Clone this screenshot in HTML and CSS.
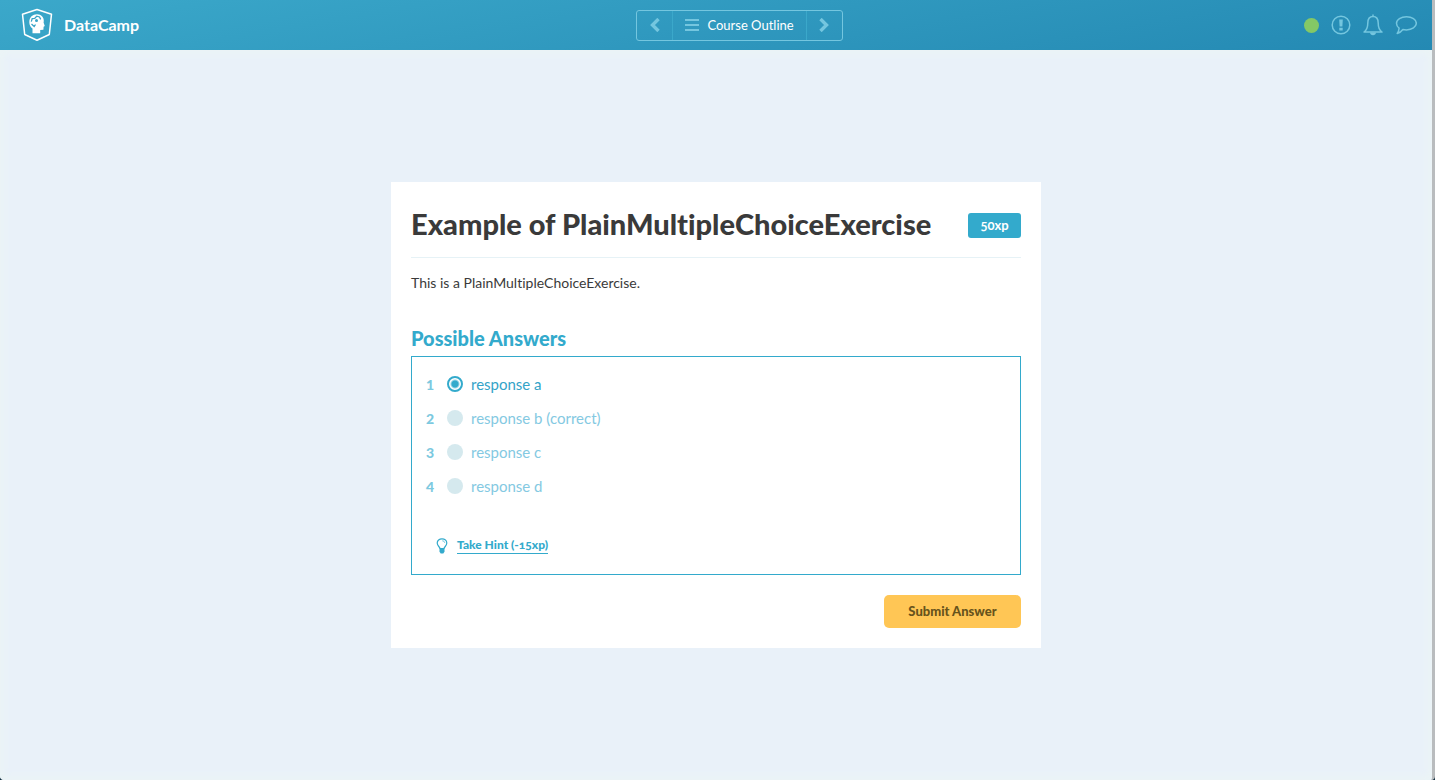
FILE: index.html
```html
<!DOCTYPE html>
<html lang="en">
<head>
<meta charset="utf-8">
<title>DataCamp</title>
<meta name="viewport" content="width=device-width, initial-scale=1">
<link rel="stylesheet" href="styles.css">
</head>
<body>
<header class="topbar">
  <a class="brand" href="#">
    <svg class="brand-logo" width="32" height="34" viewBox="0 0 32 34" aria-hidden="true">
      <path d="M16 1.500 30.500 6.200 28.300 26.500 16 32.300 3.700 26.500 1.500 6.200Z" fill="none" stroke="currentColor" stroke-width="1.500" stroke-linejoin="round"/>
      <path d="M11.500 25.300V20.500C9.700 19.300 8.300 17.200 8.300 14.200 8.300 9 11.800 6.200 16 6.200c4.400 0 6.800 3 6.800 6.500l-.2 2 1.200 3.200-1.200.8-.2 3-3.200.4v3.200Z" fill="currentColor"/>
      <path d="m10.300 13.600.9-3 2.500-.2 2-2.200 2.800.8 1.200 2.400M10.500 16l2.700 2.500 1.300-2" fill="none" stroke="#38a3c7" stroke-width="1.300"/>
      <circle cx="15.500" cy="12.500" r="1.500" fill="#38a3c7"/>
    </svg>
    <span>DataCamp</span>
  </a>
  <nav class="course-nav" aria-label="Course">
    <button class="nav-step" type="button" aria-label="Previous exercise">
      <svg width="10" height="14" viewBox="0 0 10 14"><path d="M8.500 1 2.500 7l6 6" fill="none" stroke="currentColor" stroke-width="3.400"/></svg>
    </button>
    <button class="nav-outline" type="button">
      <svg width="14" height="12" viewBox="0 0 14 12" aria-hidden="true"><path d="M0 1h14M0 6h14M0 11h14" stroke="currentColor" stroke-width="2"/></svg>
      <span>Course Outline</span>
    </button>
    <button class="nav-step" type="button" aria-label="Next exercise">
      <svg width="10" height="14" viewBox="0 0 10 14"><path d="m1.500 1 6 6-6 6" fill="none" stroke="currentColor" stroke-width="3.400"/></svg>
    </button>
  </nav>
  <div class="tools">
    <span class="status" role="img" aria-label="Connected"></span>
    <button class="tool" type="button" aria-label="Report an issue">
      <svg width="20" height="20" viewBox="0 0 20 20"><circle cx="10" cy="10" r="8.800" fill="none" stroke="currentColor" stroke-width="1.500"/><path d="M8.200 4.500h3.600l-.4 6.900H8.600ZM8.300 12.700h3.400v2.700H8.300Z" fill="currentColor"/></svg>
    </button>
    <button class="tool" type="button" aria-label="Notifications">
      <svg width="20" height="22" viewBox="0 0 20 22"><path d="M10 .5v2M1 18c3-2 3.800-4 3.800-9 0-4 2-6.500 5.200-6.500s5.200 2.500 5.200 6.500c0 5 .8 7 3.800 9Z" fill="none" stroke="currentColor" stroke-width="1.500" stroke-linejoin="round"/><path d="M7 18.500h6c-.2 1.800-1.300 2.800-3 2.800s-2.800-1-3-2.800Z" fill="currentColor"/></svg>
    </button>
    <button class="tool" type="button" aria-label="Messages">
      <svg width="22" height="20" viewBox="0 0 22 20"><path d="M11.500 1.700c5.500 0 9.800 2.900 9.800 6.600s-4.300 6.600-9.800 6.600c-1.300 0-2.500-.1-3.600-.4-1.500 2-3.500 3.400-5.700 3.900 1-1.400 1.700-2.900 1.900-5.200C2.500 12 1.500 10.300 1.500 8.300c0-3.700 4.500-6.600 10-6.600Z" fill="none" stroke="currentColor" stroke-width="1.500" stroke-linejoin="round"/></svg>
    </button>
  </div>
</header>
<main class="stage">
  <form class="card">
    <div class="card-head">
      <h1 class="title">Example of PlainMultipleChoiceExercise</h1>
      <span class="xp">50xp</span>
    </div>
    <p class="intro">This is a PlainMultipleChoiceExercise.</p>
    <h2 class="subtitle" id="answers-title">Possible Answers</h2>
    <div class="answers" role="radiogroup" aria-labelledby="answers-title">
      <ol class="options">
        <li class="option"><span class="num">1</span><input class="radio" type="radio" name="answer" id="a1" checked><label class="option-label" for="a1">response a</label></li>
        <li class="option"><span class="num">2</span><input class="radio" type="radio" name="answer" id="a2"><label class="option-label" for="a2">response b (correct)</label></li>
        <li class="option"><span class="num">3</span><input class="radio" type="radio" name="answer" id="a3"><label class="option-label" for="a3">response c</label></li>
        <li class="option"><span class="num">4</span><input class="radio" type="radio" name="answer" id="a4"><label class="option-label" for="a4">response d</label></li>
      </ol>
      <div class="hint">
        <svg width="12" height="16" viewBox="0 0 12 16" aria-hidden="true"><path d="M4 10.500C3.600 8.700 1.200 7.700 1.200 5.100 1.200 2.600 3.300.8 6 .8s4.800 1.800 4.800 4.300c0 2.600-2.400 3.600-2.800 5.400Z" fill="none" stroke="currentColor" stroke-width="1.200"/><path d="M6.300 2.800c1.400 0 2.200.8 2.400 2" fill="none" stroke="currentColor" stroke-width=".7"/><path d="M3.500 10.200h5v3.600L7.300 15.500H4.700L3.500 13.800Z" fill="currentColor"/></svg>
        <a class="hint-link" href="#">Take Hint (-15xp)</a>
      </div>
    </div>
    <div class="actions"><button class="submit" type="button">Submit Answer</button></div>
  </form>
</main>
</body>
</html>
```
FILE: styles.css
```css
* { box-sizing: border-box; }

html { background: #14303f; }

body {
  margin: 0;
  min-height: 100vh;
  display: flex;
  flex-direction: column;
  border-right: 3px solid #b9bcbe;
  border-radius: 0 0 4px 4px;
  background: #e9f1f9;
  color: #3a3a3a;
  font-family: Lato, "Open Sans", sans-serif;
  font-size: 14px;
  font-variant-ligatures: none;
}

button { font: inherit; border: 0; padding: 0; background: none; cursor: pointer; }
svg { display: block; flex: none; }

.topbar {
  display: flex;
  align-items: center;
  justify-content: space-between;
  height: 50px;
  padding: 0 15px 0 21px;
  background: linear-gradient(170deg, #3ba8ca, #2489b3);
}

.brand {
  display: flex;
  align-items: center;
  gap: 11px;
  padding-right: 36px;
  color: #fff;
  font-size: 16px;
  font-weight: 700;
  line-height: 20px;
  text-decoration: none;
}

.course-nav {
  display: flex;
  height: 31px;
  border: 1px solid #74c6df;
  border-radius: 3px;
  color: #74c6df;
}

.nav-step {
  display: flex;
  align-items: center;
  justify-content: center;
  width: 35px;
  color: inherit;
}

.nav-outline {
  display: flex;
  align-items: center;
  gap: 8px;
  padding: 0 12px;
  border: solid #3ba8ca;
  border-width: 0 1px;
  color: inherit;
  font-size: 13px;
}
.nav-outline span { color: #fff; }

.tools { display: flex; align-items: center; gap: 12px; color: #74c6df; }
.status { width: 15px; height: 15px; border-radius: 50%; background: #84c866; }
.tool { display: flex; color: inherit; }

.stage {
  flex: 1;
  display: flex;
  align-items: center;
  justify-content: center;
  border-radius: 0 0 4px 4px;
  box-shadow: inset 0 0 6px 4px #ebf4f6;
}

.card { width: 650px; max-width: 100%; padding: 20px; background: #fff; }

.card-head {
  display: flex;
  align-items: center;
  justify-content: space-between;
  height: 56px;
  padding-bottom: 8px;
  border-bottom: 1px solid #e6f2f6;
}
.title { margin: 0; padding-bottom: 4px; font-size: 29px; font-weight: 900; line-height: 36px; white-space: nowrap; }

.xp {
  width: 53px;
  border-radius: 3px;
  background: #33aacc;
  color: #fff;
  font-size: 13px;
  font-weight: 700;
  line-height: 25px;
  text-align: center;
  font-variant-numeric: oldstyle-nums;
}

.intro { margin: 15px 0 32px; line-height: 20px; }
.subtitle { margin: 0 0 5px; color: #33aacc; font-size: 20px; font-weight: 900; line-height: 26px; }

.answers { padding: 10px 14px 20px; border: 1px solid #33aacc; }
.options { margin: 0; padding: 0; list-style: none; }
.option { display: flex; align-items: center; height: 34px; }
.num { width: 21px; color: #7cc9e0; font-size: 14px; font-weight: 900; }

.radio {
  appearance: none;
  width: 16px;
  height: 16px;
  margin: 0 8px 0 0;
  border-radius: 50%;
  background: #d5e9ee;
}
.radio:checked { border: 2px solid #33aacc; background: radial-gradient(circle, #33aacc 3px, #fff 5px); }
.option-label { color: #84c9e2; font-size: 15px; }
.radio:checked + .option-label { color: #33a3c8; }

.hint { display: flex; align-items: center; gap: 9px; margin: 34px 0 0 10px; color: #33aacc; }
.hint-link {
  border-bottom: 1px solid;
  color: inherit;
  font-size: 12px;
  font-weight: 900;
  line-height: 16px;
  text-decoration: none;
  font-variant-numeric: oldstyle-nums;
}

.actions { display: flex; justify-content: flex-end; margin-top: 20px; }
.submit {
  width: 137px;
  height: 33px;
  padding-bottom: 2px;
  border-radius: 5px;
  background: #ffc655;
  color: #67531c;
  font-size: 13px;
  font-weight: 900;
}
```
